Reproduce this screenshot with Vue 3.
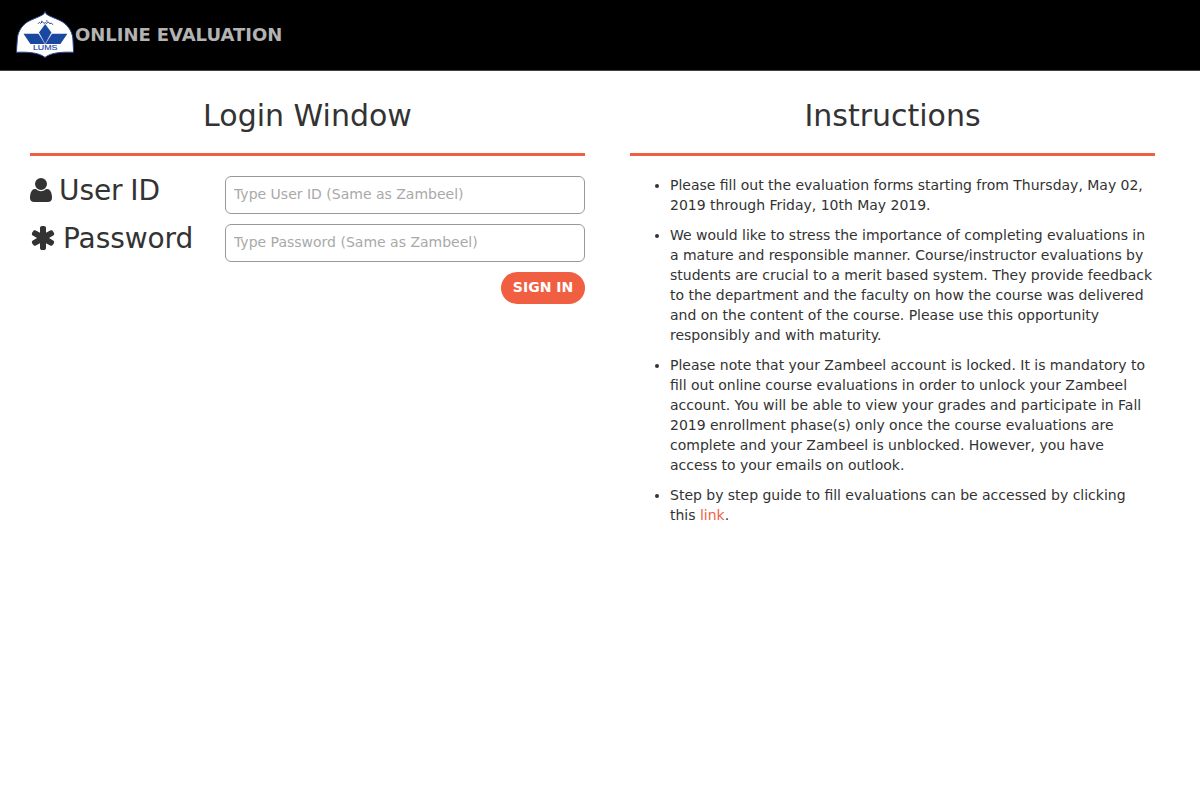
<script setup>
import { ref } from 'vue'

const userId = ref('')
const password = ref('')
const notes = [
  'Please fill out the evaluation forms starting from Thursday, May 02, 2019 through Friday, 10th May 2019.',
  'We would like to stress the importance of completing evaluations in a mature and responsible manner. Course/instructor evaluations by students are crucial to a merit based system. They provide feedback to the department and the faculty on how the course was delivered and on the content of the course. Please use this opportunity responsibly and with maturity.',
  'Please note that your Zambeel account is locked. It is mandatory to fill out online course evaluations in order to unlock your Zambeel account. You will be able to view your grades and participate in Fall 2019 enrollment phase(s) only once the course evaluations are complete and your Zambeel is unblocked. However, you have access to your emails on outlook.',
]
</script>

<template>
  <div class="page">
    <header class="navbar">
      <svg class="logo" viewBox="15 10 60 50" role="img" aria-label="LUMS">
        <path
          d="M45 11.6 L46.4 14.2 C51 17.3 57 18.6 62 21.6 C69 26 73 33 73 41 L73.6 52.3 C64 51.8 51 52.3 45 57.4 C39 52.3 26 51.8 16.4 52.3 L17.2 41 C17.2 33 21 26 28 21.6 C33 18.6 39 17.3 43.6 14.2 Z"
          fill="#fff" stroke="#27458f" stroke-width="1" />
        <path d="M38 23.8l1.4-1.5 1.2 1 1.8-1.6 1 1.2M43.6 23.6l1.8-1 1.4.9 1.5-1.6 1.2 1.6 2-.2 1.6 1.4M41 21.3h1.3M46 21h1.6" fill="none" stroke="#27458f" stroke-width="1" />
        <path d="M23.5 33.8H38.4L45.2 44H30.4Z M67.4 33.8H52L45.2 44H60.4Z" fill="#1a47a0" />
        <path d="M45.2 23.8L51.6 32.4 45.2 44.4 38.8 32.4Z" fill="#1a47a0" stroke="#fff" stroke-width=".4" />
        <text x="45.2" y="50.4" text-anchor="middle" textLength="24.5" lengthAdjust="spacingAndGlyphs">LUMS</text>
      </svg>
      <span class="brand">ONLINE EVALUATION</span>
    </header>

    <main class="columns">
      <section class="login">
        <h2>Login Window</h2>
        <form @submit.prevent>
          <div class="row">
            <label for="user">
              <svg width="22" height="24" viewBox="0 0 1408 1536">
                <path transform="matrix(1 0 0 -1 0 1408)" d="M1408 131q0 -120 -73 -189.5t-194 -69.5h-874q-121 0 -194 69.5t-73 189.5q0 53 3.5 103.5t14 109t26.5 108.5t43 97.5t62 81t85.5 53.5t111.5 20q9 0 42 -21.5t74.5 -48t108 -48t133.5 -21.5t133.5 21.5t108 48t74.5 48t42 21.5q61 0 111.5 -20t85.5 -53.5t62 -81t43 -97.5t26.5 -108.5t14 -109t3.5 -103.5zM1088 1024q0 -159 -112.5 -271.5t-271.5 -112.5t-271.5 112.5t-112.5 271.5t112.5 271.5t271.5 112.5t271.5 -112.5t112.5 -271.5z" />
              </svg>
              <span>User ID</span>
            </label>
            <input id="user" v-model="userId" type="text" placeholder="Type User ID (Same as Zambeel)">
          </div>
          <div class="row">
            <label for="pass">
              <svg width="26" height="24" viewBox="0 0 1664 1536">
                <path transform="matrix(1 0 0 -1 0 1408)" d="M1482 486q46 -26 59.5 -77.5t-12.5 -97.5l-64 -110q-26 -46 -77.5 -59.5t-97.5 12.5l-266 153v-307q0 -52 -38 -90t-90 -38h-128q-52 0 -90 38t-38 90v307l-266 -153q-46 -26 -97.5 -12.5t-77.5 59.5l-64 110q-26 46 -12.5 97.5t59.5 77.5l266 154l-266 154q-46 26 -59.5 77.5t12.5 97.5l64 110q26 46 77.5 59.5t97.5 -12.5l266 -153v307q0 52 38 90t90 38h128q52 0 90 -38t38 -90v-307l266 153q46 26 97.5 12.5t77.5 -59.5l64 -110q26 -46 12.5 -97.5t-59.5 -77.5l-266 -154z" />
              </svg>
              <span>Password</span>
            </label>
            <input id="pass" v-model="password" type="password" placeholder="Type Password (Same as Zambeel)">
          </div>
          <button type="submit">SIGN IN</button>
        </form>
      </section>

      <section class="instructions">
        <h2>Instructions</h2>
        <ul>
          <li v-for="note in notes" :key="note">{{ note }}</li>
          <li>Step by step guide to fill evaluations can be accessed by clicking this <a href="#">link</a>.</li>
        </ul>
      </section>
    </main>
  </div>
</template>

<style>
body {
  background: #fff;
}
</style>

<style scoped>
.page {
  font: 14px/20px "DejaVu Sans", sans-serif;
  color: #333;
}
.navbar {
  box-sizing: border-box;
  height: 71px;
  padding-left: 15px;
  display: flex;
  align-items: center;
  background: #000;
  border-bottom: 1px solid #444;
}
.logo {
  width: 60px;
  height: 50px;
  flex: none;
}
.logo text {
  font: 7.6px "Liberation Sans", sans-serif;
  fill: #1a47a0;
  stroke: #1a47a0;
  stroke-width: .15;
}
.brand {
  font-size: 18px;
  font-weight: bold;
  word-spacing: -.5px;
  color: #b3b3b3;
}
.columns {
  display: grid;
  grid-template-columns: 555px 525px;
  column-gap: 45px;
  padding: 20px 45px 0 30px;
}
h2 {
  margin: 0 0 20px;
  height: 62px;
  border-bottom: 3px solid #f15f43;
  font-size: 30px;
  font-weight: normal;
  line-height: 49px;
  text-align: center;
}
form {
  display: flex;
  flex-direction: column;
  gap: 10px;
}
.row {
  display: grid;
  grid-template-columns: 195px 360px;
}
label {
  display: flex;
  align-items: flex-start;
  gap: 7px;
  font-size: 28px;
  line-height: 30px;
  letter-spacing: -.08px;
  word-spacing: -1px;
}
label svg {
  margin-top: 2px;
  flex: none;
  fill: #333;
}
input {
  box-sizing: border-box;
  width: 360px;
  height: 38px;
  margin: 0;
  padding: 0 8px 2px;
  border: 1px solid #999;
  border-radius: 6px;
  background: #fff;
  color: #333;
  font: inherit;
  outline: 0;
}
input::placeholder {
  color: #a9a9a9;
  opacity: 1;
}
button {
  align-self: flex-end;
  width: 84px;
  height: 32px;
  padding: 0 0 2px;
  border: 0;
  border-radius: 16px;
  background: #f15f43;
  color: #fff;
  font: bold 14px "DejaVu Sans", sans-serif;
}
ul {
  margin: -1px 0 0;
  padding: 0 0 0 40px;
  word-spacing: -.08px;
}
li {
  margin-bottom: 10px;
}
a {
  color: #f15f43;
  text-decoration: none;
}
</style>
